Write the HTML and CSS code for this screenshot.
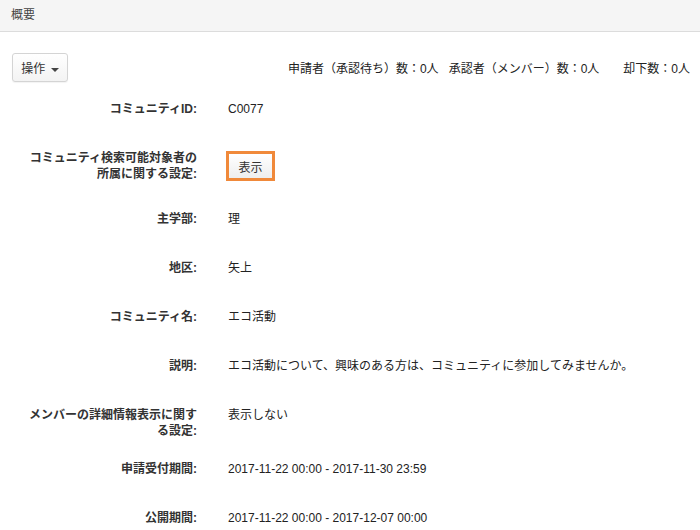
FILE: index.html
```html
<!DOCTYPE html>
<html lang="ja">
<head>
	<meta charset="UTF-8">
	<title>概要</title>
	<link rel="stylesheet" href="styles.css">
</head>
<body>
<div class="panel">
	<div class="panel-heading">概要</div>
	<div class="toolbar">
		<button class="btn-action">操作 <span class="caret"></span></button>
		<div class="stats">
			<span>申請者（承認待ち）数：0人</span>
			<span class="stat-mid">承認者（メンバー）数：0人</span>
			<span class="stat-last">却下数：0人</span>
		</div>
	</div>
	<dl class="info">
		<div class="row">
			<dt>コミュニティID:</dt>
			<dd>C0077</dd>
		</div>
		<div class="row">
			<dt>コミュニティ検索可能対象者の所属に関する設定:</dt>
			<dd class="has-btn"><button class="btn-show">表示</button></dd>
		</div>
		<div class="row">
			<dt>主学部:</dt>
			<dd>理</dd>
		</div>
		<div class="row">
			<dt>地区:</dt>
			<dd>矢上</dd>
		</div>
		<div class="row">
			<dt>コミュニティ名:</dt>
			<dd>エコ活動</dd>
		</div>
		<div class="row">
			<dt>説明:</dt>
			<dd>エコ活動について、興味のある方は、コミュニティに参加してみませんか。</dd>
		</div>
		<div class="row">
			<dt>メンバーの詳細情報表示に関する設定:</dt>
			<dd>表示しない</dd>
		</div>
		<div class="row">
			<dt>申請受付期間:</dt>
			<dd>2017-11-22 00:00 - 2017-11-30 23:59</dd>
		</div>
		<div class="row">
			<dt>公開期間:</dt>
			<dd>2017-11-22 00:00 - 2017-12-07 00:00</dd>
		</div>
	</dl>
</div>
</body>
</html>
```

FILE: styles.css
```css
*{margin: 0;padding: 0;box-sizing: border-box;}
body{
	background: #fff;
	color: #333;
	font: 12px/17px "Liberation Sans", "Noto Sans CJK JP", sans-serif;
}
.panel-heading{
	height: 32px;
	padding: 0 11px;
	line-height: 30px;
	background: #f5f5f5;
	border-bottom: 1px solid #dcdcdc;
	color: #444;
}
.toolbar{
	display: flex;
	align-items: center;
	padding: 21px 10px 0 12px;
}
.btn-action{
	width: 56px;
	height: 29px;
	border: 1px solid #d4d4d4;
	border-radius: 3px;
	background: linear-gradient(#fff, #f3f3f3);
	color: #333;
	font: 12px "Liberation Sans", "Noto Sans CJK JP", sans-serif;
	box-shadow: 0 1px 1px rgba(0,0,0,.05);
}
.caret{
	display: inline-block;
	width: 0;
	height: 0;
	margin-left: 2px;
	vertical-align: middle;
	border-top: 4px solid #444;
	border-left: 4px solid transparent;
	border-right: 4px solid transparent;
}
.stats{
	margin-left: auto;
	padding-top: 3px;
	display: flex;
	color: #222;
}
.stat-mid{
	margin-left: 10px;
}
.stat-last{
	margin-left: 24px;
}
.info{
	padding: 12px 12px 0;
}
.row{
	display: flex;
	margin-bottom: 15px;
}
.row dt{
	width: 200px;
	padding: 7px 15px 0 11px;
	line-height: 16px;
	text-align: right;
	font-weight: bold;
	color: #333;
}
.row dd{
	padding: 7px 0;
	margin-left: 16px;
	min-height: 34px;
	color: #222;
}
.row dd.has-btn{
	padding: 8px 0 8px;
}
.btn-show{
	width: 49px;
	height: 30px;
	margin-left: -2px;
	border: 3px solid #f0893a;
	background: linear-gradient(#fff, #eee);
	color: #333;
	font: 12px "Liberation Sans", "Noto Sans CJK JP", sans-serif;
}
```
